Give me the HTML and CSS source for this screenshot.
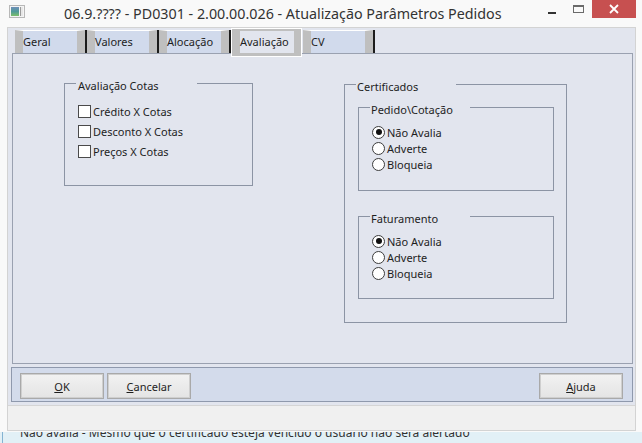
FILE: index.html
```html
<!DOCTYPE html>
<html lang="pt-BR">
<head>
  <meta charset="UTF-8">
  <title>PD0301 - Atualização Parâmetros Pedidos</title>
  <link rel="stylesheet" href="styles.css">
</head>
<body>
  <div class="window">
    <div class="titlebar">
      <svg class="app-icon" width="16" height="13" viewBox="0 0 16 13">
        <defs>
          <linearGradient id="ico" x1="0" y1="0" x2="0" y2="1">
            <stop offset="0" stop-color="#6f8fb8"/>
            <stop offset="0.5" stop-color="#4f9a9a"/>
            <stop offset="1" stop-color="#7cbf6a"/>
          </linearGradient>
        </defs>
        <rect x="0.5" y="0.5" width="15" height="12" fill="#f4f4f4" stroke="#b8b8b8"/>
        <rect x="2" y="2" width="8" height="9" fill="url(#ico)"/>
        <rect x="11" y="2" width="3" height="9" fill="#e6e6e6"/>
        <line x1="11.5" y1="2" x2="11.5" y2="11" stroke="#9a9a9a"/>
      </svg>
      <div class="title">06.9.???? - PD0301 - 2.00.00.026 - Atualização Parâmetros Pedidos</div>
      <div class="controls">
        <span class="ctl-min"></span>
        <span class="ctl-max"></span>
        <span class="ctl-close">
          <svg width="10" height="10" viewBox="0 0 10 10">
            <path d="M1 1 L9 9 M9 1 L1 9" stroke="#fff" stroke-width="1.8"/>
          </svg>
        </span>
      </div>
    </div>

    <div class="client">
      <div class="tabs">
        <div class="tab">Geral</div>
        <div class="tab">Valores</div>
        <div class="tab">Alocação</div>
        <div class="tab active">Avaliação</div>
        <div class="tab">CV</div>
      </div>

      <div class="panel">
        <div class="group cotas">
          <div class="group-title wide">Avaliação Cotas</div>
          <div class="checks">
            <div class="check-row"><span class="checkbox"></span>Crédito X Cotas</div>
            <div class="check-row"><span class="checkbox"></span>Desconto X Cotas</div>
            <div class="check-row"><span class="checkbox"></span>Preços X Cotas</div>
          </div>
        </div>

        <div class="group certificados">
          <div class="group-title">Certificados</div>
          <div class="group inner pedido">
            <div class="group-title">Pedido\Cotação</div>
            <div class="radios">
              <div class="radio-row"><span class="radio checked"></span>Não Avalia</div>
              <div class="radio-row"><span class="radio"></span>Adverte</div>
              <div class="radio-row"><span class="radio"></span>Bloqueia</div>
            </div>
          </div>
          <div class="group inner faturamento">
            <div class="group-title">Faturamento</div>
            <div class="radios">
              <div class="radio-row"><span class="radio checked"></span>Não Avalia</div>
              <div class="radio-row"><span class="radio"></span>Adverte</div>
              <div class="radio-row"><span class="radio"></span>Bloqueia</div>
            </div>
          </div>
        </div>
      </div>

      <div class="buttonbar">
        <button class="btn"><u>O</u>K</button>
        <button class="btn"><u>C</u>ancelar</button>
        <button class="btn help"><u>A</u>juda</button>
      </div>

      <div class="statusbar"></div>
    </div>
  </div>

  <div class="desktop">
    <span>Não avalia - Mesmo que o certificado esteja vencido o usuário não será alertado</span>
  </div>
</body>
</html>
```

FILE: styles.css
```css
body {
  margin: 0;
  width: 642px;
  height: 443px;
  overflow: hidden;
  background: #e2f0f6;
  font-family: 'Noto Sans', 'DejaVu Sans', sans-serif;
  color: #1e1e1e;
}

/* window frame */
.window {
  background: #f9f9f9;
  padding-bottom: 1px;
}
.titlebar {
  height: 27px;
  display: flex;
  align-items: flex-start;
}
.app-icon {
  margin: 5px 0 0 9px;
}
.title {
  margin-left: 39px;
  font-size: 14.3px;
  line-height: 27px;
  color: #333;
  white-space: nowrap;
}
.controls {
  margin-left: auto;
  margin-right: 6px;
  display: flex;
  align-items: flex-start;
}
.ctl-min {
  width: 8px;
  height: 2px;
  margin: 12px 17px 0 0;
  background: #333;
}
.ctl-max {
  box-sizing: border-box;
  width: 11px;
  height: 8px;
  margin: 5px 8px 0 0;
  border: 1px solid #6a6a6a;
  border-top-width: 2px;
}
.ctl-close {
  width: 44px;
  height: 18px;
  background: #c75050;
  display: flex;
  align-items: center;
  justify-content: center;
}

.client {
  margin: 0 6px 0 7px;
  border: 1px solid #d3d3d3;
  background: #e2e5ee;
  font-size: 11px;
}

/* tabs */
.tabs {
  height: 25px;
  display: flex;
  align-items: flex-end;
  padding-left: 7px;
}
.tab {
  box-sizing: border-box;
  width: 70px;
  height: 23px;
  margin-right: 2px;
  border-top: 1px solid #fff;
  border-left: 8px solid #bfbfbf;
  border-right: 8px solid #bfbfbf;
  background: #d1daec;
  box-shadow: 2px 0 0 #1c1c1c;
  line-height: 22px;
  white-space: nowrap;
}
.tab.active {
  position: relative;
  z-index: 1;
  width: 69px;
  height: 27px;
  margin: 0 2px -3px 1px;
  border: 0 solid #bfbfbf;
  border-width: 2px 7px 3px 8px;
  background: #e2e5ee;
  box-shadow: 0 0 0 1px #fff;
  line-height: 22px;
}

/* tab page */
.panel {
  height: 311px;
  box-sizing: border-box;
  margin: 0 2px 0 4px;
  border: 1px solid #9aa1b0;
  display: flex;
  align-items: flex-start;
}

.group {
  box-sizing: border-box;
  border: 1px solid #8c94a4;
}
.group-title {
  width: 100px;
  box-sizing: border-box;
  margin: -5px 0 0 11px;
  padding-left: 1px;
  line-height: 14px;
  background: #e2e5ee;
  white-space: nowrap;
}
.group-title.wide {
  width: 121px;
  padding-left: 2px;
}

.cotas {
  width: 189px;
  height: 103px;
  margin: 29px 0 0 51px;
}
.checks {
  margin-top: 8px;
  padding-left: 13px;
}
.check-row {
  height: 20px;
  display: flex;
  align-items: center;
}
.checkbox {
  box-sizing: border-box;
  width: 13px;
  height: 13px;
  margin-right: 2px;
  border: 1px solid #4a4a4a;
  background: #fff;
}

.certificados {
  width: 223px;
  margin: 30px 0 0 91px;
  padding-bottom: 23px;
}
.inner {
  width: 196px;
  margin-left: 13px;
}
.pedido {
  height: 84px;
  margin-top: 13px;
}
.faturamento {
  height: 83px;
  margin-top: 25px;
}
.radios {
  margin-top: 7px;
  padding-left: 13px;
}
.radio-row {
  height: 16px;
  display: flex;
  align-items: center;
}
.radio {
  box-sizing: border-box;
  width: 13px;
  height: 13px;
  margin-right: 2px;
  border: 1px solid #3c3c3c;
  border-radius: 50%;
  background: #fff;
  display: flex;
  align-items: center;
  justify-content: center;
}
.radio.checked::after {
  content: "";
  width: 6px;
  height: 6px;
  border-radius: 50%;
  background: #111;
}

/* command buttons */
.buttonbar {
  height: 35px;
  box-sizing: border-box;
  margin: 3px 2px 0 3px;
  padding: 5px 9px 0 8px;
  border: 1px solid #8f99ad;
  background: #d3dbeb;
  display: flex;
  align-items: flex-start;
  gap: 3px;
}
.btn {
  width: 84px;
  height: 26px;
  padding: 0;
  border: 1px solid #a9a9a9;
  box-shadow: inset 0 0 0 1px #cfcfcf;
  background: linear-gradient(#f2f2f2, #e4e4e4);
  font-family: inherit;
  font-size: 11px;
  color: #1e1e1e;
}
.btn.help {
  margin-left: auto;
}

.statusbar {
  height: 25px;
  box-sizing: border-box;
  margin-top: 3px;
  border-top: 1px solid #d5d5d5;
  background: #f0f0f0;
}

/* desktop behind the dialog, only the bottom of its text line shows */
.desktop {
  height: 11px;
  overflow: hidden;
  padding-left: 20px;
  border-left: 1px solid #84b3d2;
  margin-left: 2px;
  font-size: 12px;
  color: #333;
}
.desktop span {
  display: block;
  margin-top: -7px;
  margin-left: -3px;
  line-height: 16px;
  white-space: nowrap;
}
```
